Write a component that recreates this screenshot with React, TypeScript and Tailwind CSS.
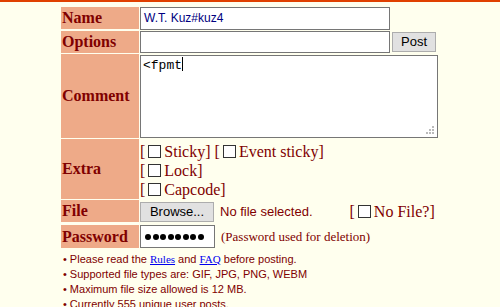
export default function App() {
  const label =
    "bg-[#eeaa88] text-[#800000] font-bold text-[16px] pl-[1px] flex items-center";
  const serif = { fontFamily: '"Liberation Serif", serif' };
  const sans = { fontFamily: '"Liberation Sans", Arial, sans-serif' };

  const Box = () => (
    <span className="inline-block w-[13px] h-[13px] border border-[#333] bg-white align-[-1px] mx-[3px]" />
  );

  return (
    <div className="w-[500px] h-[307px] bg-[#ffffee] overflow-hidden" style={serif}>
      <div className="h-[2px] bg-[#e04000]" />
      <div className="flex flex-col items-center pt-[5px]">
        <div className="w-[378px]">
          <div className="grid grid-cols-[78px_1fr] gap-[1px]">
            {/* Name */}
            <div className={`${label} h-[22px]`}>Name</div>
            <div className="flex">
              <div
                className="w-[250px] h-[23px] border border-[#767676] bg-white text-[12px] text-[#000080] pl-[3px] leading-[21px]"
                style={sans}
              >
                W.T. Kuz#kuz4
              </div>
            </div>

            {/* Options */}
            <div className={`${label} h-[22px]`}>Options</div>
            <div className="flex items-center gap-[2px]">
              <div className="w-[250px] h-[22px] border border-[#767676] bg-white" />
              <button
                className="w-[44px] h-[20px] bg-[#e1e1e1] border border-[#adadad] text-[13px] text-black leading-[18px]"
                style={sans}
              >
                Post
              </button>
            </div>

            {/* Comment */}
            <div className={`${label} h-[84px]`}>Comment</div>
            <div className="flex pt-[1px]">
              <div className="relative w-[298px] h-[83px] border border-[#767676] bg-white">
                <span
                  className="absolute left-[2px] top-[1px] text-[13px] text-black leading-[16px]"
                  style={{ fontFamily: '"Liberation Mono", monospace' }}
                >
                  &lt;fpmt<span className="inline-block w-[1px] h-[14px] bg-black align-[-2px]" />
                </span>
                <svg className="absolute right-[3px] bottom-[3px]" width="8" height="8" viewBox="0 0 8 8">
                  <rect x="6" y="0" width="2" height="2" fill="#bbb" />
                  <rect x="3" y="3" width="2" height="2" fill="#bbb" />
                  <rect x="6" y="3" width="2" height="2" fill="#bbb" />
                  <rect x="0" y="6" width="2" height="2" fill="#bbb" />
                  <rect x="3" y="6" width="2" height="2" fill="#bbb" />
                  <rect x="6" y="6" width="2" height="2" fill="#bbb" />
                </svg>
              </div>
            </div>

            {/* Extra */}
            <div className={`${label} h-[60px]`}>Extra</div>
            <div className="flex flex-col text-[16px] text-[#800000] leading-[19px] pt-[3px]">
              <div>
                [<Box />Sticky] [<Box />Event sticky]
              </div>
              <div>
                [<Box />Lock]
              </div>
              <div>
                [<Box />Capcode]
              </div>
            </div>

            {/* File */}
            <div className={`${label} h-[22px]`}>File</div>
            <div className="flex items-center">
              <button
                className="w-[74px] h-[20px] bg-[#e1e1e1] border border-[#adadad] text-[13px] text-black leading-[18px]"
                style={sans}
              >
                Browse...
              </button>
              <span className="ml-[6px] text-[13px] text-[#800000]" style={sans}>
                No file selected.
              </span>
              <span className="ml-[37px] text-[16px] text-[#800000]">
                [<Box />No File?]
              </span>
            </div>

            {/* Password */}
            <div className={`${label} h-[23px]`}>Password</div>
            <div className="flex items-center">
              <div className="w-[75px] h-[23px] border border-[#767676] bg-white flex items-center pl-[4px] gap-[1.5px]">
                {Array.from({ length: 8 }).map((_, i) => (
                  <span key={i} className="w-[6px] h-[6px] rounded-full bg-black" />
                ))}
              </div>
              <span className="ml-[6px] text-[13px] text-[#800000]">
                (Password used for deletion)
              </span>
            </div>
          </div>

          <ul className="mt-[4px] pl-[2px] text-[11px] text-[#800000] leading-[15px]" style={sans}>
            <li className="flex gap-[3px]">
              <span>•</span>
              <span>
                Please read the{" "}
                <a className="text-[#0000ee] underline" style={serif}>Rules</a> and{" "}
                <a className="text-[#0000ee] underline" style={serif}>FAQ</a> before posting.
              </span>
            </li>
            <li className="flex gap-[3px]">
              <span>•</span>
              <span>Supported file types are: GIF, JPG, PNG, WEBM</span>
            </li>
            <li className="flex gap-[3px]">
              <span>•</span>
              <span>Maximum file size allowed is 12 MB.</span>
            </li>
            <li className="flex gap-[3px]">
              <span>•</span>
              <span>Currently 555 unique user posts.</span>
            </li>
          </ul>
        </div>
      </div>
    </div>
  );
}
